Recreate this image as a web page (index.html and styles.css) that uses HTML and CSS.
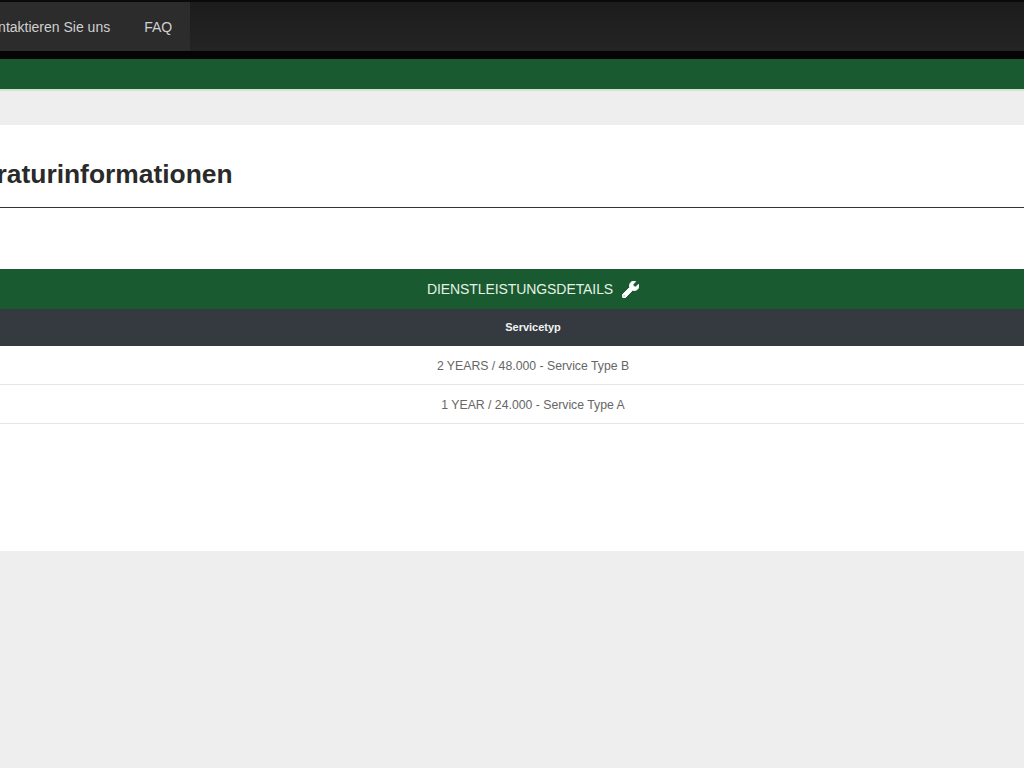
FILE: index.html
```html
<!DOCTYPE html>
<html lang="de">
<head>
<meta charset="utf-8">
<title>Reparaturinformationen</title>
<link rel="stylesheet" href="styles.css">
</head>
<body>
<div class="page">
  <nav class="nav">
    <a class="nav-item">Kontaktieren Sie uns</a>
    <a class="nav-item">FAQ</a>
  </nav>
  <div class="band"></div>
  <div class="gap"></div>
  <main class="card">
    <h1 class="title">Reparaturinformationen</h1>
    <section class="details">
      <div class="details-head">
        <span>DIENSTLEISTUNGSDETAILS</span>
        <svg class="wrench" viewBox="0 0 512 512" width="17" height="17"><path fill="#fff" stroke="#fff" stroke-width="24" d="M507.7 109.1c-2.2-9-13.5-12-20.1-5.5l-74.4 74.4-67.900-11.300-11.300-67.900 74.400-74.400c6.600-6.600 3.400-17.900-5.700-20.200-47.400-11.700-99.500.9-136.600 38-39.700 39.700-50.900 97.200-34.100 147.200L18.700 402.700c-25 25-25 65.500 0 90.500 25 25 65.500 25 90.500 0l213.200-213.200c50 16.800 107.500 5.600 147.200-34.100 37.200-37.200 49.700-89.300 38.100-136.800zM64 472c-13.300 0-24-10.700-24-24s10.700-24 24-24 24 10.700 24 24-10.700 24-24 24z"/></svg>
      </div>
      <div class="details-cols">Servicetyp</div>
      <div class="details-row">2 YEARS / 48.000 - Service Type B</div>
      <div class="details-row">1 YEAR / 24.000 - Service Type A</div>
    </section>
  </main>
</div>
</body>
</html>
```
FILE: styles.css
```css
html, body {
  margin: 0;
  height: 100%;
  overflow: hidden;
  background: #eeeeee;
  font-family: "Liberation Sans", Arial, sans-serif;
}
.page {
  width: 1266px;
  margin-left: -100px;
}
.nav {
  display: flex;
  height: 49px;
  padding-left: 65px;
  background: linear-gradient(#1c1c1c, #242424);
  border-top: 2px solid #0a0a0a;
  border-bottom: 8px solid #050505;
}
.nav-item {
  display: flex;
  align-items: center;
  padding: 0 18px 0 16px;
  font-size: 14px;
  color: #d0d0d0;
  background: #2c2c2c;
}
.band {
  height: 30px;
  background: #1a5a30;
  border-bottom: 2px solid #cfe6d3;
}
.gap { height: 34px; }
.card {
  height: 426px;
  background: #fff;
  display: flex;
  flex-direction: column;
}
.title {
  margin: 0;
  height: 83px;
  box-sizing: border-box;
  padding: 32px 0 0 32px;
  font-size: 26.4px;
  line-height: 34px;
  font-weight: 700;
  color: #2a2a2a;
  border-bottom: 1px solid #333;
}
.details { margin-top: 61px; }
.details-head {
  height: 40px;
  background: #1a5a30;
  color: #e4f2e6;
  font-size: 14px;
  letter-spacing: -0.08px;
  display: flex;
  align-items: center;
  justify-content: center;
  gap: 9px;
}
.wrench { flex: none; }
.details-cols {
  height: 36px;
  padding-bottom: 1px;
  background: #343a40;
  color: #f2f2f2;
  font-size: 11px;
  font-weight: 700;
  display: flex;
  align-items: center;
  justify-content: center;
}
.details-row {
  height: 37px;
  padding-top: 1px;
  border-bottom: 1px solid #e6e6e6;
  color: #666;
  font-size: 12.25px;
  display: flex;
  align-items: center;
  justify-content: center;
}
```
